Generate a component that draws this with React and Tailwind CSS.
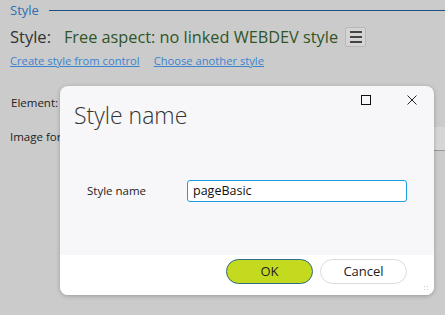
export default function App() {
  const font = { fontFamily: '"Segoe UI", "Open Sans", "Noto Sans", sans-serif' };
  return (
    <div className="w-[445px] h-[315px] bg-[#cbcbcb] relative overflow-hidden text-[#222]" style={font}>
      <div className="flex items-center pl-[10px] pt-[3px] h-[18px]">
        <span className="text-[13px] text-[#2e6fb0] leading-none">Style</span>
        <div className="ml-[10px] flex-1 h-px bg-[#1d4f80]" />
      </div>
      <div className="flex items-center pl-[10px] mt-[8px] h-[22px]">
        <span className="text-[16.5px] text-[#333] leading-none">Style:</span>
        <span className="ml-[13px] text-[16.3px] text-[#2f5528] leading-none">Free aspect: no linked WEBDEV style</span>
        <div className="ml-[7px] w-[21px] h-[20px] border border-[#b8b8b8] bg-[#d4d4d4] rounded-[2px] flex flex-col items-center justify-center gap-[3px]">
          <div className="w-[12px] h-[2px] bg-[#444]" />
          <div className="w-[12px] h-[2px] bg-[#444]" />
          <div className="w-[12px] h-[2px] bg-[#444]" />
        </div>
      </div>
      <div className="flex pl-[10px] mt-[5px] gap-[14px] text-[11.2px] text-[#3a84d0] underline leading-[16px]">
        <span>Create style from control</span>
        <span>Choose another style</span>
      </div>
      <div className="pl-[11px] mt-[26px] text-[11.5px] text-[#222] leading-[16px]">Element:</div>
      <div className="pl-[10px] mt-[18px] text-[11.5px] text-[#222] leading-[16px]">Image format</div>
      <div className="absolute left-[434px] top-[127px] w-[20px] h-[24px] bg-[#d6d6d6] border-b border-[#999]" />

      <div className="absolute left-[60px] top-[86px] w-[374px] h-[209px] rounded-[8px] bg-[#f7f7f9] shadow-[0_1px_4px_rgba(0,0,0,0.25)] overflow-hidden flex flex-col">
        <div className="flex items-start h-[94px] relative">
          <div className="pl-[14px] pt-[14px] text-[23px] font-light text-[#333] leading-[30px]">Style name</div>
          <div className="absolute left-[301px] top-[9px] w-[10px] h-[10px] border border-[#111]" />
          <svg className="absolute left-[347px] top-[9px]" width="10" height="10" viewBox="0 0 10 10">
            <path d="M0.5 0.5 L9.5 9.5 M9.5 0.5 L0.5 9.5" stroke="#222" strokeWidth="1" />
          </svg>
        </div>
        <div className="flex items-center h-[22px]">
          <span className="pl-[27px] w-[127px] text-[11.5px] text-[#222]">Style name</span>
          <div className="w-[220px] h-[22px] border border-[#1a9ee0] rounded-[3px] bg-white flex items-center pl-[5px] text-[12.5px] text-[#111]">pageBasic</div>
        </div>
        <div className="flex-1" />
        <div className="h-[40px] bg-white flex items-start justify-end pr-[27px] pt-[4px] gap-[7px] relative">
          <div className="w-[87px] h-[25px] rounded-full bg-[#c3da1f] border border-[#2d6c86] flex items-center justify-center text-[13px] text-[#222]">OK</div>
          <div className="w-[87px] h-[25px] rounded-full bg-white border border-[#dcdcdc] flex items-center justify-center text-[13px] text-[#222]">Cancel</div>
          <div className="absolute right-[6px] bottom-[5px] grid grid-cols-2 gap-[2px]">
            <div className="w-[1px] h-[1px] bg-[#ccc]" />
            <div className="w-[1px] h-[1px] bg-[#ccc]" />
            <div className="w-[1px] h-[1px] bg-[#ccc]" />
            <div className="w-[1px] h-[1px] bg-[#ccc]" />
          </div>
        </div>
      </div>
    </div>
  );
}
